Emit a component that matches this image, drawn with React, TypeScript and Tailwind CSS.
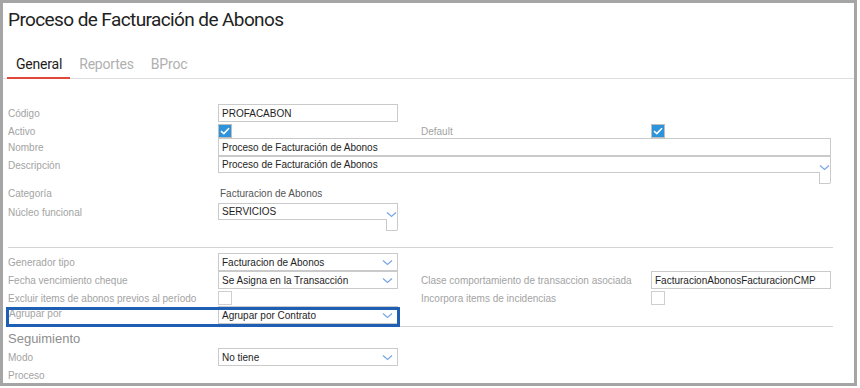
import type { ReactNode } from "react";

const font = { fontFamily: '"Liberation Sans", Arial, sans-serif' };
const roboto = { fontFamily: 'Roboto, "Liberation Sans", sans-serif' };

function Chevron() {
  return (
    <svg width="11" height="7" viewBox="0 0 11 7" className="shrink-0">
      <path d="M1 1.5 L5.5 5.5 L10 1.5" fill="none" stroke="#7aa7e6" strokeWidth="1.3" />
    </svg>
  );
}

function Check({ checked }: { checked?: boolean }) {
  if (!checked) {
    return <div className="h-[14px] w-[14px] border border-[#cfcfcf] bg-white" />;
  }
  return (
    <div className="flex h-[14px] w-[14px] items-center justify-center border border-[#bdbdbd] bg-[#2d93db]">
      <svg width="10" height="8" viewBox="0 0 10 8">
        <path d="M1 4.2 L3.8 6.6 L9 1.2" fill="none" stroke="#fff" strokeWidth="1.6" />
      </svg>
    </div>
  );
}

function TextBox({ value, wide }: { value: string; wide?: boolean }) {
  return (
    <div
      className={`flex h-[18px] items-center border border-[#cacaca] bg-white pl-[3px] text-[10px] text-[#1e1e1e] ${
        wide ? "w-[613px]" : "w-[180px]"
      }`}
    >
      {value}
    </div>
  );
}

function Select({ value }: { value: string }) {
  return (
    <div className="flex h-[18px] w-[180px] items-center justify-between border border-[#cacaca] bg-white pl-[3px] pr-[4px] text-[10px] text-[#1e1e1e]">
      <span>{value}</span>
      <Chevron />
    </div>
  );
}

// select whose right corner drops lower than the field (resize grip style)
function NotchedSelect({ value, width }: { value: string; width: string }) {
  return (
    <div className={`flex h-[28px] items-start ${width}`}>
      <div className="flex h-[17px] flex-1 items-center border-y border-l border-[#cacaca] pl-[3px] text-[10px] text-[#1e1e1e]">
        {value}
      </div>
      <div className="flex h-[28px] w-[12px] flex-col rounded-br-[2px] border-y border-r border-[#cacaca]">
        <div className="flex h-[15px] items-end justify-center pb-[1px]">
          <Chevron />
        </div>
        <div className="h-[11px] border-l border-[#cacaca]" />
      </div>
    </div>
  );
}

function Row({
  label,
  h,
  children,
  rightLabel,
  right,
  className = "",
}: {
  label: string;
  h: string;
  children?: ReactNode;
  rightLabel?: string;
  right?: ReactNode;
  className?: string;
}) {
  return (
    <div className={`grid grid-cols-[210px_203px_230px_180px] items-start ${h} ${className}`}>
      <div className="flex h-[18px] items-center text-[10px] text-[#a3a3a3]">{label}</div>
      <div>{children}</div>
      <div className="flex h-[18px] items-center text-[10px] text-[#a3a3a3]">{rightLabel}</div>
      <div>{right}</div>
    </div>
  );
}

export default function App() {
  return (
    <div className="h-[386px] w-[857px] border-[3px] border-[#a5a5a5] bg-white" style={font}>
      <div
        className="h-[30px] pl-[5px] pt-[6px] text-[19px] leading-[22px] tracking-[-0.6px] text-[#222]"
        style={roboto}
      >
        Proceso de Facturación de Abonos
      </div>

      <div
        className="mt-[23px] flex h-[23px] items-start border-b border-[#dedede] pl-[4px] text-[14px] leading-[17px] tracking-[-0.2px]"
        style={roboto}
      >
        <div className="h-[23px] border-b-2 border-[#e0483a] pl-[9px] pr-[8px] text-[#1d1d1d]">General</div>
        <div className="pl-[9px] pr-[8px] text-[#b0b0b0]">Reportes</div>
        <div className="pl-[9px] pr-[8px] text-[#b0b0b0]">BProc</div>
      </div>

      <div className="pl-[5px] pt-[25px]">
        <Row label="Código" h="h-[18px]">
          <TextBox value="PROFACABON" />
        </Row>
        <Row
          label="Activo"
          h="h-[16px]"
          rightLabel="Default"
          right={
            <div className="pt-[2px]">
              <Check checked />
            </div>
          }
        >
          <div className="pt-[2px]">
            <Check checked />
          </div>
        </Row>
        <div className="grid h-[18px] grid-cols-[210px_613px] items-start">
          <div className="flex h-[18px] items-center text-[10px] text-[#a3a3a3]">Nombre</div>
          <TextBox value="Proceso de Facturación de Abonos" wide />
        </div>
        <div className="grid h-[28px] grid-cols-[210px_613px] items-start">
          <div className="flex h-[18px] items-center text-[10px] text-[#a3a3a3]">Descripción</div>
          <NotchedSelect value="Proceso de Facturación de Abonos" width="w-[613px]" />
        </div>
        <div className="grid h-[18px] grid-cols-[210px_613px] items-center text-[10px]">
          <div className="text-[#a3a3a3]">Categoría</div>
          <div className="pl-[2px] text-[#555]">Facturacion de Abonos</div>
        </div>
        <div className="mt-[1px] grid h-[28px] grid-cols-[210px_613px] items-start">
          <div className="flex h-[18px] items-center text-[10px] text-[#a3a3a3]">Núcleo funcional</div>
          <NotchedSelect value="SERVICIOS" width="w-[180px]" />
        </div>

        <div className="mr-[21px] mt-[16px] border-t border-[#d4d4d4]" />

        <Row label="Generador tipo" h="h-[18px]" className="mt-[5px]">
          <Select value="Facturacion de Abonos" />
        </Row>
        <Row
          label="Fecha vencimiento cheque"
          h="h-[18px]"
          rightLabel="Clase comportamiento de transaccion asociada"
          right={<TextBox value="FacturacionAbonosFacturacionCMP" />}
        >
          <Select value="Se Asigna en la Transacción" />
        </Row>
        <Row
          label="Excluir items de abonos previos al período"
          h="h-[17px]"
          rightLabel="Incorpora items de incidencias"
          right={
            <div className="pt-[2px]">
              <Check />
            </div>
          }
        >
          <div className="pt-[2px]">
            <Check />
          </div>
        </Row>

        <div className="relative">
          <div className="mr-[21px] grid h-[21px] grid-cols-[210px_613px] items-start border-b border-[#d4d4d4]">
            <div className="flex h-[15px] items-center pl-[1px] text-[10px] text-[#a3a3a3]">Agrupar por</div>
            <Select value="Agrupar por Contrato" />
          </div>
          <div className="absolute left-[-2px] top-[1px] h-[20px] w-[394px] border-[3px] border-[#1f5fb3]" />
        </div>

        <div className="mt-[3px] flex h-[18px] items-center text-[13px] text-[#8e8e8e]">Seguimiento</div>
        <Row label="Modo" h="h-[18px]">
          <Select value="No tiene" />
        </Row>
        <div className="flex h-[18px] items-center text-[10px] text-[#a3a3a3]">Proceso</div>
      </div>
    </div>
  );
}
